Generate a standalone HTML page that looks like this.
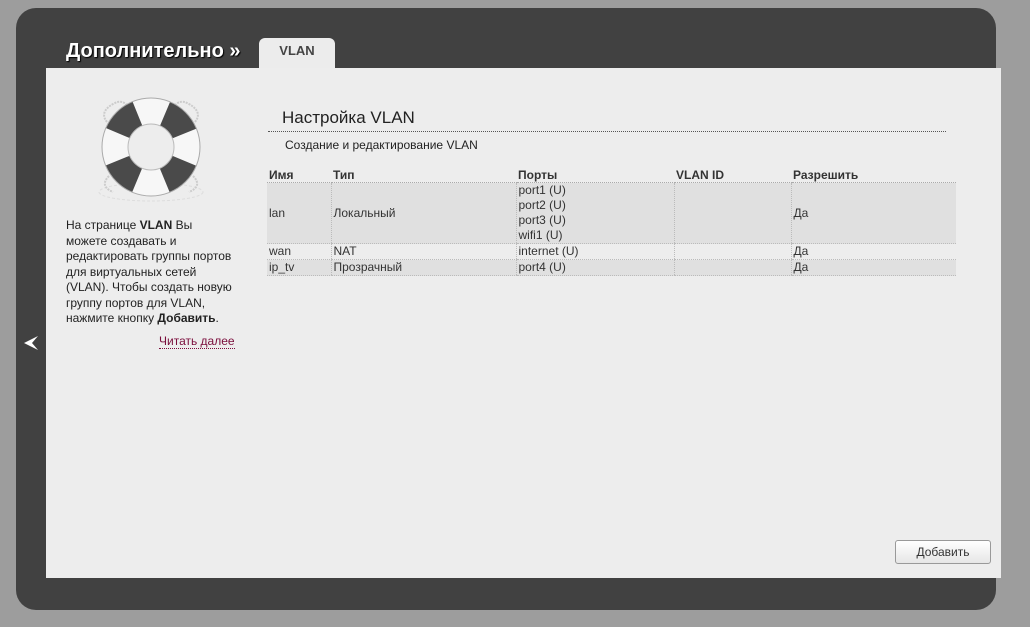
<!DOCTYPE html>
<html><head><meta charset="utf-8"><style>
body{margin:0;width:1030px;height:627px;background:#9d9d9d;font-family:"Liberation Sans",Arial,sans-serif;position:relative;overflow:hidden}
.dark{position:absolute;left:16px;top:8px;width:980px;height:602px;background:#414141;border-radius:20px}
.title{position:absolute;left:66px;top:40px;color:#fff;font-weight:bold;font-size:20px;text-shadow:1px 1px 1px #000}
.tab{position:absolute;left:259px;top:38px;width:76px;height:32px;background:#ececec;border-radius:6px 6px 0 0;text-align:center;font-weight:bold;font-size:13px;color:#444;line-height:26px}
.panel{position:absolute;left:46px;top:68px;width:955px;height:510px;background:#ededed}
.side{position:absolute;left:66px;top:218px;width:166px;font-size:12px;color:#222;line-height:15.5px}
.more{position:absolute;left:159px;top:334px;font-size:12px;color:#7a0c3b;border-bottom:1px dotted #7a0c3b}
h1{position:absolute;left:282px;top:108px;margin:0;font-weight:normal;font-size:17px;color:#222}
.hr{position:absolute;left:268px;top:131px;width:678px;border-top:1px dotted #555}
.sub{position:absolute;left:285px;top:138px;font-size:12px;color:#222}
table{position:absolute;left:267px;top:167px;width:689px;border-collapse:collapse;font-size:12px;color:#333}
th{text-align:left;font-weight:bold;height:15px;padding:0 2px;border-bottom:1px dotted #aaa}
td{padding:0 2px;line-height:15px;border-left:1px dotted #bbb;border-bottom:1px dotted #bbb}
td:first-child{border-left:none}
tr.g td{background:#e0e0e0}
.btn{position:absolute;left:895px;top:540px;width:94px;height:22px;border:1px solid #999;border-radius:3px;background:linear-gradient(#fff,#e6e6e6);font-size:12px;text-align:center;line-height:22px;color:#333}
</style></head><body>
<div class="dark"></div>
<div class="title">Дополнительно »</div>
<div class="tab">VLAN</div>
<div class="panel"></div>
<svg style="position:absolute;left:95px;top:92px" width="112" height="112" viewBox="0 0 112 112">
<ellipse cx="56" cy="100" rx="52" ry="9" fill="none" stroke="#ddd" stroke-dasharray="3 2"/>
<path d="M12 30 Q4 20 18 12 Q28 6 34 16 M100 30 Q108 20 94 12 Q84 6 78 16 M14 84 Q4 94 18 100 M98 84 Q108 94 94 100" fill="none" stroke="#ccc" stroke-width="2" stroke-dasharray="2 1"/>
<circle cx="56" cy="55" r="36" fill="none" stroke="#f7f7f7" stroke-width="26"/>
<circle cx="56" cy="55" r="36" fill="none" stroke="#4a4a4a" stroke-width="26" stroke-dasharray="28.27 28.27" stroke-dashoffset="-14.14"/>
<circle cx="56" cy="55" r="49" fill="none" stroke="#aaa" stroke-width="1"/>
<circle cx="56" cy="55" r="23" fill="none" stroke="#bbb" stroke-width="1"/>
</svg>
<svg style="position:absolute;left:22px;top:334px" width="18" height="18"><path d="M16 2 L2 9 L16 16 L10 9 Z" fill="#fff"/></svg>
<div class="side">На странице <b>VLAN</b> Вы можете создавать и редактировать группы портов для виртуальных сетей (VLAN). Чтобы создать новую группу портов для VLAN, нажмите кнопку <b>Добавить</b>.</div>
<div class="more">Читать далее</div>
<h1>Настройка VLAN</h1>
<div class="hr"></div>
<div class="sub">Создание и редактирование VLAN</div>
<table>
<tr><th style="width:60px">Имя</th><th style="width:181px">Тип</th><th style="width:154px">Порты</th><th style="width:113px">VLAN ID</th><th>Разрешить</th></tr>
<tr class="g"><td>lan</td><td>Локальный</td><td>port1 (U)<br>port2 (U)<br>port3 (U)<br>wifi1 (U)</td><td></td><td>Да</td></tr>
<tr><td>wan</td><td>NAT</td><td>internet (U)</td><td></td><td>Да</td></tr>
<tr class="g"><td>ip_tv</td><td>Прозрачный</td><td>port4 (U)</td><td></td><td>Да</td></tr>
</table>
<div class="btn">Добавить</div>
</body></html>
